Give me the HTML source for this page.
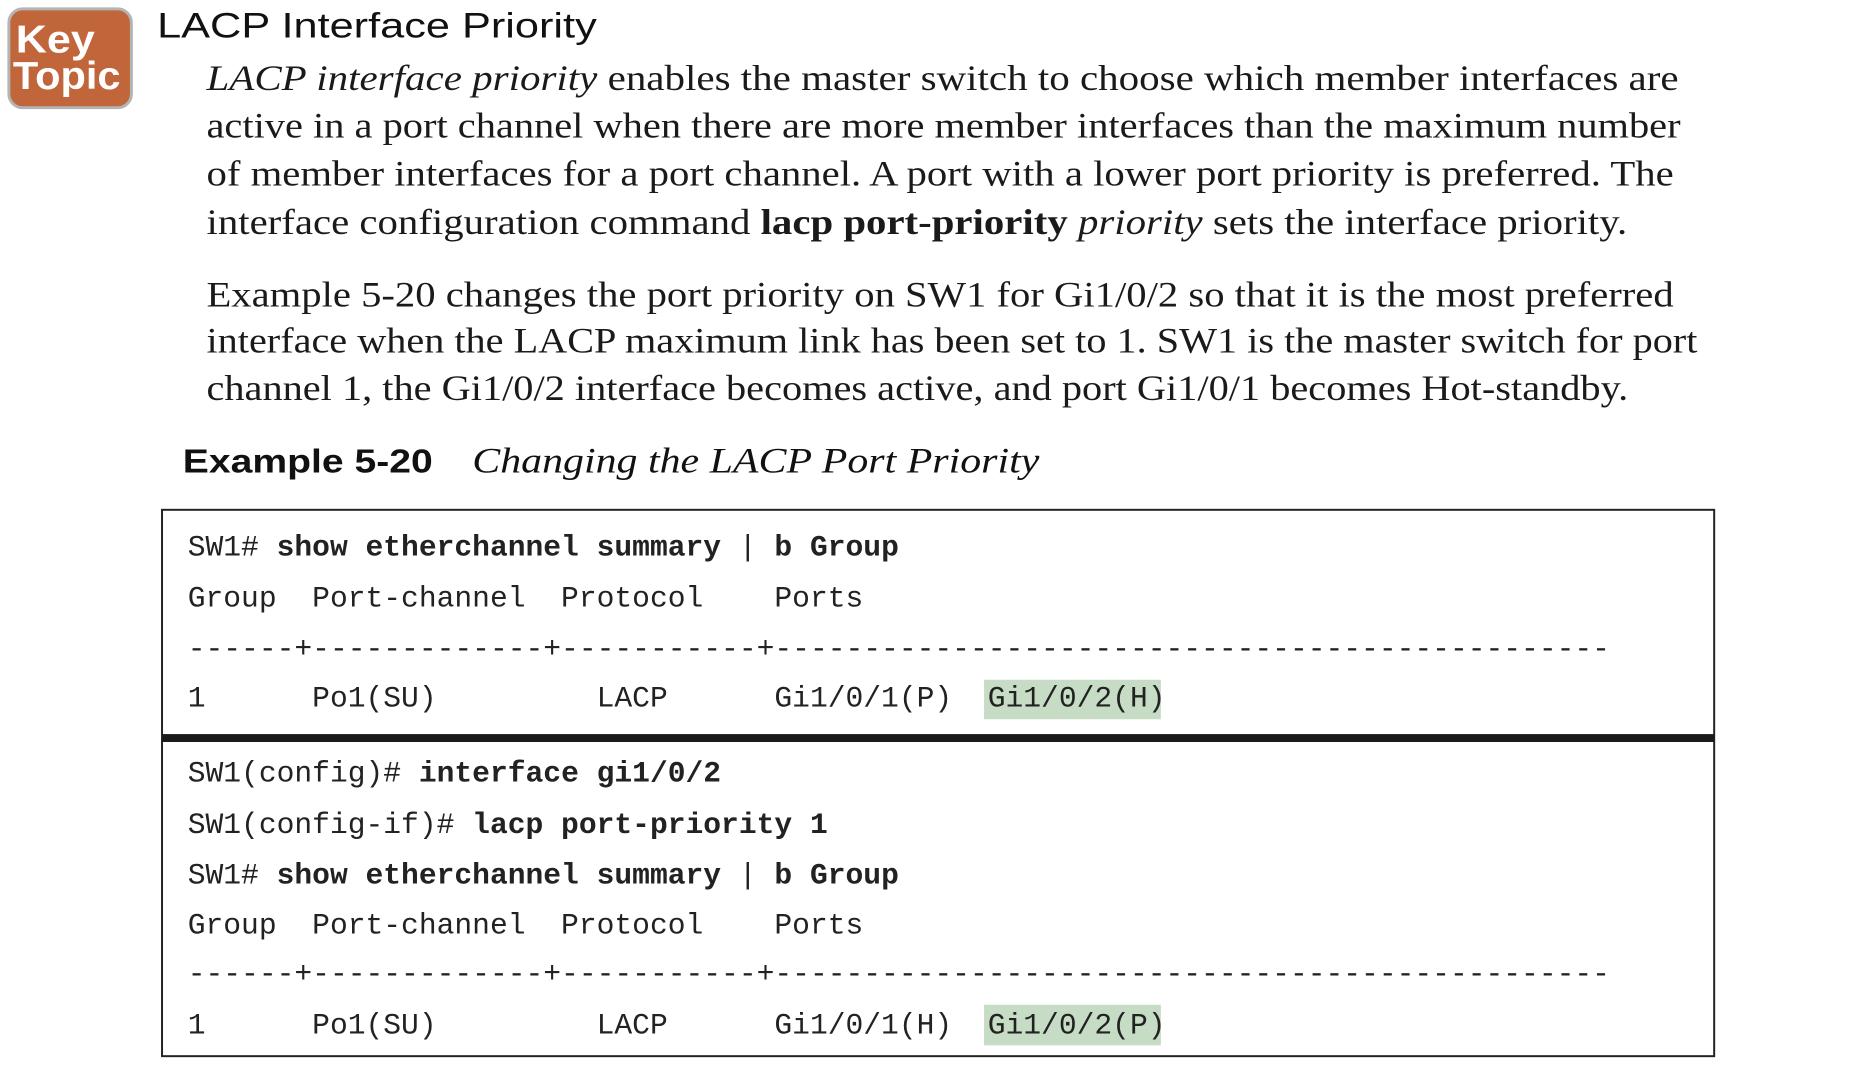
<!DOCTYPE html>
<html><head><meta charset="utf-8"><style>
html,body{margin:0;padding:0;background:#fff;width:1874px;height:1066px;overflow:hidden}
svg{display:block}
.s{font-family:"Liberation Serif",serif;font-size:36px;fill:#1a1a1a}
.m{font-family:"Liberation Mono",monospace;font-size:30px;fill:#222;white-space:pre}
.b{font-weight:bold}
</style></head><body>
<svg width="1874" height="1066" viewBox="0 0 1874 1066" xmlns="http://www.w3.org/2000/svg">
<g transform="scale(0.988)">
<rect x="9" y="9" width="124" height="100" rx="14" fill="#c1653a" stroke="#b4b4b4" stroke-width="3"/>
<text x="16" y="53" font-family="Liberation Sans,sans-serif" font-weight="bold" font-size="39" fill="#fff" textLength="80" lengthAdjust="spacingAndGlyphs">Key</text>
<text x="13" y="90" font-family="Liberation Sans,sans-serif" font-weight="bold" font-size="39" fill="#fff" textLength="109" lengthAdjust="spacingAndGlyphs">Topic</text>
<text x="159" y="38" font-family="Liberation Sans,sans-serif" font-size="36" fill="#111" textLength="445" lengthAdjust="spacingAndGlyphs">LACP Interface Priority</text>

<text class="s" x="209" y="91" textLength="1490" lengthAdjust="spacingAndGlyphs"><tspan font-style="italic">LACP interface priority</tspan> enables the master switch to choose which member interfaces are</text>
<text class="s" x="209" y="139" textLength="1492" lengthAdjust="spacingAndGlyphs">active in a port channel when there are more member interfaces than the maximum number</text>
<text class="s" x="209" y="188" textLength="1485" lengthAdjust="spacingAndGlyphs">of member interfaces for a port channel. A port with a lower port priority is preferred. The</text>
<text class="s" x="209" y="237" textLength="1438" lengthAdjust="spacingAndGlyphs">interface configuration command <tspan font-weight="bold">lacp port-priority</tspan> <tspan font-style="italic">priority</tspan> sets the interface priority.</text>
<text class="s" x="209" y="310" textLength="1485" lengthAdjust="spacingAndGlyphs">Example 5-20 changes the port priority on SW1 for Gi1/0/2 so that it is the most preferred</text>
<text class="s" x="209" y="357" textLength="1509" lengthAdjust="spacingAndGlyphs">interface when the LACP maximum link has been set to 1. SW1 is the master switch for port</text>
<text class="s" x="209" y="405" textLength="1439" lengthAdjust="spacingAndGlyphs">channel 1, the Gi1/0/2 interface becomes active, and port Gi1/0/1 becomes Hot-standby.</text>

<text x="185" y="478" font-family="Liberation Sans,sans-serif" font-weight="bold" font-size="34" fill="#111" textLength="253" lengthAdjust="spacingAndGlyphs">Example 5-20</text>
<text x="478" y="478" font-family="Liberation Serif,serif" font-style="italic" font-size="36" fill="#111" textLength="574" lengthAdjust="spacingAndGlyphs">Changing the LACP Port Priority</text>

<rect x="164" y="516" width="1571" height="553" fill="none" stroke="#222" stroke-width="2"/>
<rect x="164" y="743" width="1571" height="8" fill="#1a1a1a"/>
<rect x="996" y="688" width="179" height="40" fill="#c6dcc4"/>
<rect x="996" y="1017" width="179" height="41" fill="#c6dcc4"/>

<text class="m" x="190" y="562">SW1# <tspan class="b">show etherchannel summary</tspan> | <tspan class="b">b Group</tspan></text>
<text class="m" x="190" y="614">Group  Port-channel  Protocol    Ports</text>
<text class="m" x="190" y="665">------+-------------+-----------+-----------------------------------------------</text>
<text class="m" x="190" y="715">1      Po1(SU)         LACP      Gi1/0/1(P)  Gi1/0/2(H)</text>
<text class="m" x="190" y="791">SW1(config)# <tspan class="b">interface gi1/0/2</tspan></text>
<text class="m" x="190" y="843">SW1(config-if)# <tspan class="b">lacp port-priority 1</tspan></text>
<text class="m" x="190" y="894">SW1# <tspan class="b">show etherchannel summary</tspan> | <tspan class="b">b Group</tspan></text>
<text class="m" x="190" y="945">Group  Port-channel  Protocol    Ports</text>
<text class="m" x="190" y="994">------+-------------+-----------+-----------------------------------------------</text>
<text class="m" x="190" y="1046">1      Po1(SU)         LACP      Gi1/0/1(H)  Gi1/0/2(P)</text>
</g>
</svg>
</body></html>
